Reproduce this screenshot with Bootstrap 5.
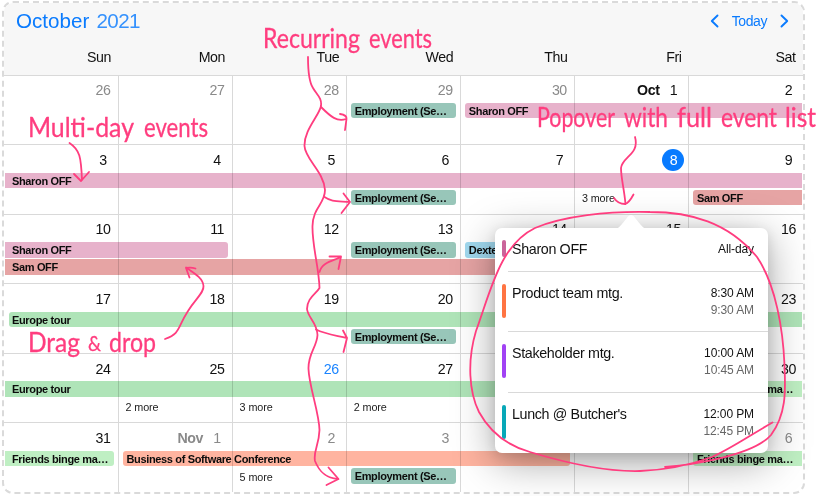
<!DOCTYPE html>
<html lang="en">
<head>
<meta charset="utf-8">
<meta name="viewport" content="width=device-width, initial-scale=1">
<title>October 2021</title>
<link href="https://cdn.jsdelivr.net/npm/bootstrap@5.3.0/dist/css/bootstrap.min.css" rel="stylesheet">
<style>
body{width:818px;height:496px;font-family:"Liberation Sans",Arial,sans-serif;font-size:14.2px;letter-spacing:-.4px;line-height:1;color:#111}
.cal{width:803px;height:493px;margin:1px 0 0 2px;border:2px dashed #dadada;border-radius:11px}
.cal-head{height:71.5px;background:#f7f7f7}
.cal-bar{height:36px;padding:0 14px 0 12px}
.cal-title{font-size:20.6px;color:#0a7bfe;line-height:1;letter-spacing:0}
.cal-title span{letter-spacing:-.6px;opacity:.82;margin-left:1.5px}
.cal-nav{color:#0a7bfe;font-size:14px;gap:13px}
.days,.week{display:grid;grid-template-columns:114.5px repeat(5,114.1px) 1fr}
.days div{text-align:right;padding:11px 7.5px 0 0}
.week{height:69.6px;grid-template-rows:28px 17.2px 17.2px 1fr}
.day{grid-row:1/-1;border-top:1px solid #d9d9d9;border-right:1px solid #d9d9d9;padding:3.7px 3.5px 0 0;display:flex;justify-content:flex-end;align-items:flex-start;white-space:nowrap}
.day:nth-child(7){border-right:0}
.day b,.day i{font-style:normal;display:block;line-height:22px}
.day b{padding-right:3px}
.day i{width:22px;text-align:center;border-radius:50%}
.dim{color:#8a8a8a}
.today{color:#1a84ff}
.picked{background:#087bff;color:#fff}
.ev{grid-row:2;height:15.3px;margin:.6px 5px 0 4.5px;border-radius:3px;font-weight:700;font-size:11px;letter-spacing:-.35px;line-height:16.6px;padding-left:3.5px;white-space:nowrap;overflow:hidden;mix-blend-mode:multiply;color:#0c0c0c}
.r2{grid-row:3}
.from{margin-left:1px;padding-left:7px;border-top-left-radius:0;border-bottom-left-radius:0}
.to{margin-right:1px;border-top-right-radius:0;border-bottom-right-radius:0}
.more{grid-row:3;font-size:10.8px;letter-spacing:-.1px;line-height:18px;padding-left:7px;color:#222}
.c1{grid-column-start:1}.c2{grid-column-start:2}.c3{grid-column-start:3}.c4{grid-column-start:4}.c5{grid-column-start:5}.c6{grid-column-start:6}.c7{grid-column-start:7}
.s2{grid-column-end:span 2}.s3{grid-column-end:span 3}.s4{grid-column-end:span 4}.s5{grid-column-end:span 5}.s6{grid-column-end:span 6}.s7{grid-column-end:span 7}
.pink{background:#e7b2cb}.red{background:#e6a4a4}.green{background:#afe4b8}.lime{background:#bfefc3}.teal{background:#98c6b9}.coral{background:#ffb4a0}.sky{background:#a0d8ee}
.pop{position:absolute;left:495px;top:228px;width:273px;height:225px;background:#fff;border-radius:7px;box-shadow:0 9px 42px rgba(0,0,0,.36),0 3px 12px rgba(0,0,0,.1)}
.pop-tip{position:absolute;left:121px;top:-13px}
.pop-row{margin-left:13px;border-top:1px solid #d9d9d9;height:60.4px;padding:14px 14px 0 4px;font-size:14.3px;letter-spacing:-.35px}
.pop-row:first-of-type{border-top:0;height:43px;padding-top:14px}
.pop-time{font-size:12px;letter-spacing:-.1px;line-height:17px;text-align:right;color:#111;margin-top:-1px}
.pop-time span{color:#666;display:block}
.pop-mark{width:4px;height:34px;border-radius:2px;margin:-2px 6.5px 0 -10.5px}
.pop-mark.short{height:17px}
.notes{position:absolute;left:0;top:0;pointer-events:none;letter-spacing:0}
.notes text{font-family:Lato,sans-serif;font-size:26px;fill:#ff3d7f;stroke:#ff3d7f;stroke-width:.3;stroke-linejoin:round}
</style>
</head>
<body class="position-relative overflow-hidden bg-white">
<main class="cal overflow-hidden">
  <header class="cal-head">
    <div class="cal-bar d-flex justify-content-between align-items-center">
      <h1 class="cal-title m-0 fw-normal">October <span>2021</span></h1>
      <div class="cal-nav d-flex align-items-center">
        <svg width="9" height="14" viewBox="0 0 9 14" fill="none" stroke="currentColor" stroke-width="1.9" stroke-linecap="round" stroke-linejoin="round"><path d="M7.5 1.5 1.8 7l5.700 5.500"/></svg>
        <span>Today</span>
        <svg width="9" height="14" viewBox="0 0 9 14" fill="none" stroke="currentColor" stroke-width="1.9" stroke-linecap="round" stroke-linejoin="round"><path d="M1.500 1.500 7.200 7l-5.700 5.500"/></svg>
      </div>
    </div>
    <div class="days"><div>Sun</div><div>Mon</div><div>Tue</div><div>Wed</div><div>Thu</div><div>Fri</div><div>Sat</div></div>
  </header>

  <section class="week">
    <div class="day c1 dim"><i>26</i></div><div class="day c2 dim"><i>27</i></div><div class="day c3 dim"><i>28</i></div><div class="day c4 dim"><i>29</i></div><div class="day c5 dim"><i>30</i></div><div class="day c6"><b>Oct</b><i>1</i></div><div class="day c7"><i>2</i></div>
    <div class="ev c4 teal">Employment (Se…</div>
    <div class="ev c5 s3 to pink">Sharon OFF</div>
  </section>
  <section class="week">
    <div class="day c1"><i>3</i></div><div class="day c2"><i>4</i></div><div class="day c3"><i>5</i></div><div class="day c4"><i>6</i></div><div class="day c5"><i>7</i></div><div class="day c6"><i class="picked">8</i></div><div class="day c7"><i>9</i></div>
    <div class="ev c1 s7 from to pink">Sharon OFF</div>
    <div class="ev r2 c4 teal">Employment (Se…</div>
    <div class="more c6">3 more</div>
    <div class="ev r2 c7 to red">Sam OFF</div>
  </section>
  <section class="week">
    <div class="day c1"><i>10</i></div><div class="day c2"><i>11</i></div><div class="day c3"><i>12</i></div><div class="day c4"><i>13</i></div><div class="day c5"><i>14</i></div><div class="day c6"><i>15</i></div><div class="day c7"><i>16</i></div>
    <div class="ev c1 s2 from pink">Sharon OFF</div>
    <div class="ev c4 teal">Employment (Se…</div>
    <div class="ev c5 sky">Dexte</div>
    <div class="ev r2 c1 s5 from red">Sam OFF</div>
  </section>
  <section class="week">
    <div class="day c1"><i>17</i></div><div class="day c2"><i>18</i></div><div class="day c3"><i>19</i></div><div class="day c4"><i>20</i></div><div class="day c5"></div><div class="day c6"></div><div class="day c7"><i>23</i></div>
    <div class="ev c1 s7 to green">Europe tour</div>
    <div class="ev r2 c4 teal">Employment (Se…</div>
  </section>
  <section class="week">
    <div class="day c1"><i>24</i></div><div class="day c2"><i>25</i></div><div class="day c3 today"><i>26</i></div><div class="day c4"><i>27</i></div><div class="day c5"></div><div class="day c6"></div><div class="day c7"><i>30</i></div>
    <div class="ev c1 s6 from green">Europe tour</div>
    <div class="ev c7 to lime">Friends binge ma…</div>
    <div class="more c2">2 more</div><div class="more c3">3 more</div><div class="more c4">2 more</div>
  </section>
  <section class="week">
    <div class="day c1"><i>31</i></div><div class="day c2 dim"><b>Nov</b><i>1</i></div><div class="day c3 dim"><i>2</i></div><div class="day c4 dim"><i>3</i></div><div class="day c5"></div><div class="day c6"></div><div class="day c7 dim"><i>6</i></div>
    <div class="ev c1 from lime">Friends binge ma…</div>
    <div class="ev c2 s4 coral">Business of Software Conference</div>
    <div class="ev c7 to lime">Friends binge ma…</div>
    <div class="more c3">5 more</div>
    <div class="ev r2 c4 teal">Employment (Se…</div>
  </section>
</main>

<aside class="pop">
  <svg class="pop-tip" width="30" height="14" viewBox="0 0 30 14"><path d="M0 14C4 13 11 2 13 .8Q15-.8 17 .8C19 2 26 13 30 14Z" fill="#fff"/></svg>
  <div class="pop-row d-flex"><span class="pop-mark short" style="background:#ca649a"></span><span class="flex-grow-1">Sharon OFF</span><div class="pop-time">All-day</div></div>
  <div class="pop-row d-flex"><span class="pop-mark" style="background:#ff7442"></span><span class="flex-grow-1">Product team mtg.</span><div class="pop-time">8:30 AM<span>9:30 AM</span></div></div>
  <div class="pop-row d-flex"><span class="pop-mark" style="background:#a142f4"></span><span class="flex-grow-1">Stakeholder mtg.</span><div class="pop-time">10:00 AM<span>10:45 AM</span></div></div>
  <div class="pop-row d-flex"><span class="pop-mark" style="background:#08a8b8"></span><span class="flex-grow-1">Lunch @ Butcher's</span><div class="pop-time">12:00 PM<span>12:45 PM</span></div></div>
</aside>

<svg class="notes" width="818" height="496" viewBox="0 0 818 496">
  <g fill="none" stroke="#ff3d7f" stroke-width="1.8" stroke-linecap="round" stroke-linejoin="round">
    <path d="M308 57C308 72 309 82 313 88C317 95 322 98 321 106C319 116 304 130 304.500 146C305 159 324 172 325 190C325 204 313 207 312.500 226C312 245 319 268 319.500 288C316 294 307 298 307 309C308 318 317 322 317.500 335C317 347 308 353 308.500 369C309 386 319 412 319.500 430C319 446 313 451 315 461C319 471 325 478 338 479"/>
    <path d="M321 107C331 117 337 122 346 119M340 114Q347 115 346.500 119L345 130"/>
    <path d="M324.500 197C332 202 336 201 350 202M343.500 193.500L350 202L341.500 213"/>
    <path d="M319.500 272C322 262 333 261 341 257M329.500 256.500L341 256.500L338.500 269"/>
    <path d="M316 329.500C325 334 334 335 347 338M343 330.500L347 338L343.500 352"/>
    <path d="M328.500 467.500L338.500 479L326.500 485"/>
    <path d="M69.500 143C80 150 81 157 82 180M74 174L81 181L89 172"/>
    <path d="M165 339C181 333 177 328 188 311C196 298 204 293 203.500 286C203 278 194 273 186 267.500M189.500 277.500L186 268Q191 267 195.500 268.500"/>
    <path d="M635 137C640 154 622 157 621 168C621 178 624 188 625.500 204M614 198Q618 204 625 204Q629 203 633.500 194.500"/>
    <path d="M665 467C690 465 753 456 771 435C788 412 785 385 784.500 365C783 330 776 285 757 257C728 222 690 212 650 212C608 211 563 216 535 228C500 245 491 290 476 331C467 361 469 392 479 412C491 434 509 446 530 452C563 462 605 472 640 471C665 470 690 465 712 457C732 448 752 434 772.500 422.500"/>
  </g>
  <g>
    <text x="263" y="48" textLength="97" lengthAdjust="spacingAndGlyphs">Recurring</text>
    <text x="369" y="48" textLength="63" lengthAdjust="spacingAndGlyphs">events</text>
    <text x="28" y="137" textLength="106" lengthAdjust="spacingAndGlyphs">Multi-day</text>
    <text x="144" y="137" textLength="64" lengthAdjust="spacingAndGlyphs">events</text>
    <text x="537" y="127" textLength="78" lengthAdjust="spacingAndGlyphs">Popover</text>
    <text x="624" y="127" textLength="44" lengthAdjust="spacingAndGlyphs">with</text>
    <text x="677" y="127" textLength="35" lengthAdjust="spacingAndGlyphs">full</text>
    <text x="721" y="127" textLength="56" lengthAdjust="spacingAndGlyphs">event</text>
    <text x="785" y="127" textLength="31" lengthAdjust="spacingAndGlyphs">list</text>
    <text x="28" y="352" textLength="52" lengthAdjust="spacingAndGlyphs">Drag</text>
    <text x="88" y="351" textLength="13" lengthAdjust="spacingAndGlyphs" style="font-size:22px">&amp;</text>
    <text x="109" y="352" textLength="47" lengthAdjust="spacingAndGlyphs">drop</text>
  </g>
</svg>
<script src="https://cdn.jsdelivr.net/npm/bootstrap@5.3.0/dist/js/bootstrap.bundle.min.js"></script>
</body>
</html>
